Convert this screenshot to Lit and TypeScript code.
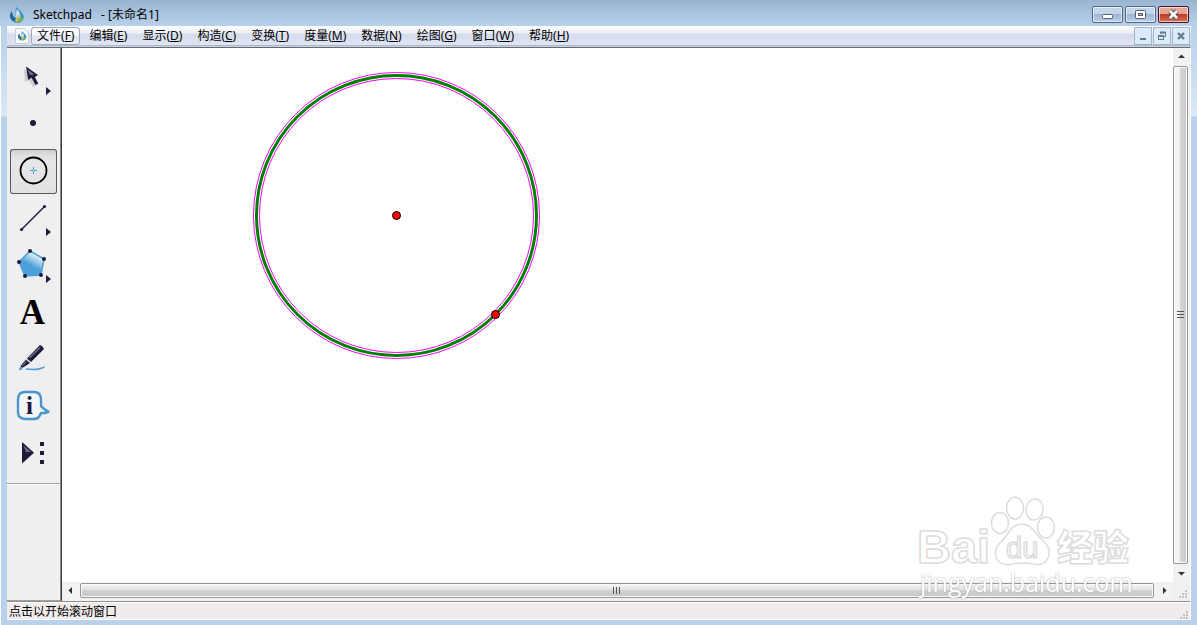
import { LitElement, html, svg, css } from "lit";
import { customElement, state } from "lit/decorators.js";

const flyout = svg`<path d="M36 32 L41 36 L36 40 Z" fill="#1f1a3a"/>`;

const tools = [
  {
    id: "select",
    label: "移动箭头工具",
    icon: svg`
      <path d="M14 14 L15 27 L19 25 L23 32 L26 31 L23 24 L26 22 Z" fill="#000" opacity=".15"/>
      <path d="M16 11.500 L18.3 25 L21.5 22.5 L25.5 30 L28.300 28.5 L24.8 22 L28 20 Z" fill="#1f1a3a"/>
      <path d="M17.5 14.5 L24.5 19.5 L20 20 Z" fill="#77758c"/>
      ${flyout}`,
  },
  { id: "point", label: "点工具", icon: svg`<circle cx="23" cy="21" r="3" fill="#1f1a3a"/>` },
  {
    id: "compass",
    label: "圆工具",
    icon: svg`
      <circle cx="23.5" cy="21.5" r="13" fill="none" stroke="#000" stroke-width="1.8"/>
      <path d="M20 21.5 H23 M24 21.5 H27 M23.5 18 V21 M23.5 22 V25" stroke="#3d9bd0"/>`,
  },
  {
    id: "segment",
    label: "线段工具",
    icon: svg`
      <path d="M11.5 33.5 L34.5 10.5" stroke="#1f1a3a" stroke-width="1.4"/>
      <circle cx="11.5" cy="33.5" r="1.6" fill="#1f1a3a"/>
      <circle cx="34.5" cy="10.5" r="1.6" fill="#1f1a3a"/>
      ${flyout}`,
  },
  {
    id: "polygon",
    label: "多边形工具",
    icon: svg`
      <defs><linearGradient id="poly" x1=".75" y1=".15" x2=".5" y2=".6">
        <stop offset="0" stop-color="#f2f9fd"/><stop offset="1" stop-color="#4ba0d8"/>
      </linearGradient></defs>
      <path d="M20 8 L34 16 L31 32 L15 33 L9 19 Z" fill="url(#poly)" stroke="#4ba0d8" stroke-width="1.5"/>
      ${[[20, 8], [34, 16], [31, 32], [15, 33], [9, 19]].map(
        ([x, y]) => svg`<circle cx=${x} cy=${y} r="2" fill="#1f1a3a"/>`
      )}
      ${flyout}`,
  },
  {
    id: "text",
    label: "文本工具",
    icon: svg`<text class="serif" x="22.5" y="34" font-size="35" text-anchor="middle">A</text>`,
  },
  {
    id: "marker",
    label: "标记工具",
    icon: svg`
      <path d="M30 8 Q33 9 34 12 L21 25 L17 21.5 Z" fill="#1f1a3a"/>
      <path d="M30 10.5 L19.5 21" stroke="#77758c" stroke-width="1.2"/>
      <path d="M16 22.5 L20 26 L13 30.5 L10.5 31 L11 28.5 Z" fill="#1f1a3a"/>
      <path d="M17 23.5 L12.5 29" stroke="#8a889a"/>
      <path d="M9 32.500 Q9 29.5 12 30 Q13.5 33.5 9 33 Z" fill="#4ba0d8"/>
      <path d="M16 32 Q28 33.500 34.5 30" fill="none" stroke="#4ba0d8" stroke-width="1.6"/>`,
  },
  {
    id: "info",
    label: "信息工具",
    icon: svg`
      <path d="M15 8 H24 Q31 8 31 16 V22 Q33 25 38.5 27.5 Q38 29 31 29 Q29 35 24 35 H16 Q8 35 8 28 V16 Q8 8 15 8 Z"
        fill="#f3f6f9" stroke="#4895cd" stroke-width="2.4" stroke-linejoin="round"/>
      <text class="serif info" x="19.5" y="30" font-size="25" text-anchor="middle">i</text>`,
  },
  {
    id: "custom",
    label: "自定义工具",
    icon: svg`
      <path d="M12 11 L24 21.8 L12 32.5 Z" fill="#1f1a3a"/>
      <path d="M13.5 14.5 L21 21 L16 21 Z" fill="#6f6d82"/>
      <path d="M30 11 h4 v4 h-4 Z M30 20 h4 v4 h-4 Z M30 29 h4 v4 h-4 Z" fill="#1f1a3a"/>`,
  },
];

const menus = [
  ["文件", "F"], ["编辑", "E"], ["显示", "D"], ["构造", "C"], ["变换", "T"],
  ["度量", "M"], ["数据", "N"], ["绘图", "G"], ["窗口", "W"], ["帮助", "H"],
];

const drop = svg`
  <path d="M7 0 Q15 6 15 11 Q13 16 8 16 Q2 15 1 10 Q1 6 3 5 Q4 9 7 11 Q6 5 7 0 Z" fill="#3b93c4"/>
  <path d="M8 2 Q12 6 11 11 Q10 13 8 13 Q6 8 8 2 Z" fill="#c4e6f5"/>
  <path d="M3 4 Q2 9 7 12 Q7 14 5 14 Q1 12 1 9 Q1 6 3 4 Z" fill="#27648f"/>
  <path d="M6 13 Q9 9 10 7 Q11 11 9 15 Q7 16 6 13 Z" fill="#d9b93a"/>
  <path d="M11 12 Q13 10 15 10 Q14 15 10 16 Z" fill="#6fbb5c"/>`;

const grip = svg`<path d="M7 1h2v2H7z M4 4h2v2H4z M7 4h2v2H7z M1 7h2v2H1z M4 7h2v2H4z M7 7h2v2H7z" fill="#c3c0bf"/>`;

@customElement("app-root")
export class AppRoot extends LitElement {
  @state() private tool = "compass";

  static styles = css`
    :host {
      display: flex;
      flex-direction: column;
      box-sizing: border-box;
      height: 100vh;
      padding: 0 6px 5px 7px;
      overflow: hidden;
      background:
        linear-gradient(#fff, #fff) left / 1px 100% no-repeat,
        linear-gradient(#99b4d1, #b9d1ea 26px, #c3d8ee 60px, #dce9f7 116px, #b9d1ea 117px);
      font: 12px/16px "Noto Sans", "Noto Sans CJK SC", sans-serif;
      color: #000;
    }
    * { box-sizing: border-box; }
    svg { display: block; flex: none; }
    button {
      display: flex;
      align-items: center;
      justify-content: center;
      margin: 0;
      padding: 0;
      border: 0;
      background: none;
      font: inherit;
      color: inherit;
    }
    .titlebar {
      flex: none;
      display: flex;
      align-items: center;
      height: 26px;
      margin: 0 -6px 0 -7px;
      padding: 3px 8px 0 9px;
      background: linear-gradient(#99b4d1, #b9d1ea);
    }
    .title { margin: 0 auto 0 8px; font: inherit; white-space: pre; }
    .caption { display: flex; gap: 2px; }
    .caption button {
      width: 31px;
      height: 17px;
      border: 1px solid #53687f;
      border-radius: 2px;
      box-shadow: inset 0 0 0 1px #ffffff99;
      background: linear-gradient(#c3d5e9 45%, #9db7d3 50%, #b9d0e9);
    }
    .caption .close {
      border-color: #4e1520;
      background: linear-gradient(#e5a597 45%, #bf3a24 50%, #d4735a);
    }
    .menubar {
      flex: none;
      display: flex;
      align-items: center;
      height: 20px;
      padding: 0 1px 0 8px;
      border-bottom: 1px solid #b2b6c4;
      background: linear-gradient(#fff, #eef0f7 35%, #d5dbec 45%, #e0e5f3);
    }
    .menus { display: flex; gap: 3px; margin: 0 auto 0 2px; }
    .menus button { height: 18px; padding: 0 6px; white-space: nowrap; }
    .menus .hot {
      padding: 0 5px;
      border: 1px solid #9fa6b7;
      border-radius: 3px;
      background: linear-gradient(#fafbfd 45%, #dfe3ef 50%, #e9edf6);
    }
    .mdi { display: flex; gap: 1px; }
    .mdi button {
      width: 18px;
      height: 18px;
      border: 1px solid #a3b5c8;
      background: #dcebf9;
    }
    .work {
      position: relative;
      flex: 1;
      display: flex;
      min-height: 0;
      border-top: 1px solid #696969;
      border-right: 1px solid #fff;
      margin-top: 1px;
      background: #f0f0f0;
    }
    .toolbox {
      flex: none;
      width: 55px;
      border-right: 2px ridge #8c8c8c;
      border-bottom: 1px solid #a0a0a0;
      background: #efefef;
    }
    .tools {
      display: flex;
      flex-direction: column;
      gap: 2px;
      padding: 7px 3px;
      border-bottom: 1px solid #a0a0a0;
      box-shadow: 0 1px #fff;
    }
    .tools button { width: 47px; height: 45px; border-radius: 3px; }
    .tools .active {
      background: linear-gradient(#c9c9c9, #dedede 6px, #e6e6e6 12px, #e2e2e2);
      box-shadow: inset 0 0 0 1px #5a5a5a;
    }
    .serif { font-family: "Liberation Serif", serif; font-weight: bold; }
    .info { fill: #1f1a3a; }
    .view {
      flex: 1;
      min-width: 0;
      display: grid;
      grid-template: minmax(0, 1fr) 19px / minmax(0, 1fr) 17px;
    }
    .canvas { width: 100%; height: 100%; background: #fff; }
    .bar { display: flex; background: #f2f2f2; }
    .bar button { flex: none; width: 17px; height: 17px; }
    .bar.v { flex-direction: column; }
    .thumb {
      flex: 1;
      display: flex;
      align-items: center;
      justify-content: center;
      border: 1px solid #979797;
      border-radius: 2px;
      box-shadow: inset 0 0 0 1px #fafafa;
    }
    .v .thumb { width: 15px; margin: 1px 0; background: linear-gradient(90deg, #f4f4f4 40%, #d6d6d9 50%, #c8c8cc); }
    .h .thumb { height: 15px; margin: 1px 2px 0 1px; background: linear-gradient(#f4f4f4, #e3e3e3 45%, #d1d1d3 50%, #c8c8cc); }
    .corner { display: flex; align-items: flex-end; justify-content: flex-end; padding: 3px; }
    .mark { position: absolute; right: 50px; bottom: 0; pointer-events: none; }
    .outline { fill: #fff; stroke: #dcdcdc; stroke-width: 1.5px; stroke-linejoin: round; }
    .bold { stroke: #dcdcdc; stroke-width: 4px; }
    .face { fill: #fff; stroke: #fff; stroke-width: 1.5px; }
    .latin { font: bold 47px "Liberation Sans", sans-serif; }
    .du { font: 29px "Liberation Sans", sans-serif; }
    .cjk { font: 900 36px "Noto Sans CJK SC", sans-serif; }
    .url { font: 25px "Open Sans", sans-serif; fill: #fff; filter: drop-shadow(0 0 1px #aaa); }
    .status {
      flex: none;
      display: flex;
      align-items: center;
      justify-content: space-between;
      height: 19px;
      padding: 2px 2px 0;
      border-top: 1px solid #8f8f8f;
      border-right: 1px solid #fff;
      border-bottom: 1px solid #fff;
      box-shadow: inset 0 1px #fff;
      background: #f0eceb;
    }
    .status svg { align-self: flex-end; }
  `;

  private arrow(label: string, d: string) {
    return html`<button aria-label=${label}>
      <svg width="9" height="9"><path d=${d} fill="#333"/></svg>
    </button>`;
  }

  render() {
    return html`
      <header class="titlebar">
        <svg width="16" height="16">${drop}</svg>
        <h1 class="title">Sketchpad   - [未命名1]</h1>
        <div class="caption">
          <button aria-label="最小化"><svg width="13" height="11"><rect x="1.5" y="5.5" width="10" height="4" rx="1" fill="#fff" stroke="#555e70"/></svg></button>
          <button aria-label="最大化"><svg width="13" height="11"><rect x="1.5" y="1.5" width="10" height="8" rx="1" fill="#fff" stroke="#555e70"/><rect x="4.5" y="4.5" width="4" height="2" fill="#a9c0da" stroke="#555e70"/></svg></button>
          <button class="close" aria-label="关闭"><svg width="13" height="11"><path d="M3 2 L10 9 M10 2 L3 9" stroke="#555060" stroke-width="4.6"/><path d="M3 2 L10 9 M10 2 L3 9" stroke="#fff" stroke-width="2.6"/></svg></button>
        </div>
      </header>

      <nav class="menubar">
        <svg width="14" height="16" viewBox="0 0 14 16">
          <path d="M.5 .5 H10 L13.5 4 V15.5 H.5 Z" fill="#f7f9fc" stroke="#c9ccd6"/>
          <g transform="translate(2.5 3) scale(.6)">${drop}</g>
        </svg>
        <div class="menus">
          ${menus.map(([name, key], i) => html`<button class=${i === 0 ? "hot" : ""}>${name}(<u>${key}</u>)</button>`)}
        </div>
        <div class="mdi">
          <button aria-label="最小化文档"><svg width="10" height="10"><path d="M2 8 H8" stroke="#667a8e" stroke-width="2"/></svg></button>
          <button aria-label="还原文档"><svg width="10" height="10"><path d="M3.5 3 V1.5 H8.5 V5.5 H7" fill="none" stroke="#667a8e"/><path d="M3 1.5 H9 M1 5 H7" stroke="#667a8e" stroke-width="2"/><rect x="1.5" y="4.5" width="5" height="4" fill="none" stroke="#667a8e"/></svg></button>
          <button aria-label="关闭文档"><svg width="10" height="10"><path d="M2 2 L8 8 M8 2 L2 8" stroke="#667a8e" stroke-width="2.4"/></svg></button>
        </div>
      </nav>

      <main class="work">
        <aside class="toolbox">
          <div class="tools">
            ${tools.map((t) => html`
              <button class=${t.id === this.tool ? "active" : ""} aria-label=${t.label}
                aria-pressed=${t.id === this.tool} @click=${() => (this.tool = t.id)}>
                <svg width="47" height="45">${t.icon}</svg>
              </button>`)}
          </div>
        </aside>
        <section class="view">
          <svg class="canvas" role="img" aria-label="画板">
            <circle cx="334.5" cy="167.5" r="143" fill="none" stroke="#f0f"/>
            <circle cx="334.5" cy="167.5" r="140" fill="none" stroke="#008000" stroke-width="3"/>
            <circle cx="334.5" cy="167.5" r="137" fill="none" stroke="#f0f"/>
            <circle cx="334.5" cy="167.5" r="4" fill="#f00" stroke="#000"/>
            <circle cx="433.5" cy="266.5" r="4" fill="#f00" stroke="#000"/>
          </svg>
          <div class="bar v">
            ${this.arrow("向上滚动", "M1 6 L4.5 2.5 L8 6 Z")}
            <div class="thumb"><svg width="7" height="8"><path d="M0 .5 H7 M0 3.5 H7 M0 6.5 H7" stroke="#555"/></svg></div>
            ${this.arrow("向下滚动", "M1 3 L4.5 6.5 L8 3 Z")}
          </div>
          <div class="bar h">
            ${this.arrow("向左滚动", "M6 1 L2.5 4.5 L6 8 Z")}
            <div class="thumb"><svg width="8" height="7"><path d="M.5 0 V7 M3.5 0 V7 M6.5 0 V7" stroke="#555"/></svg></div>
            ${this.arrow("向右滚动", "M3 1 L6.5 4.5 L3 8 Z")}
          </div>
          <div class="corner"><svg width="9" height="9">${grip}</svg></div>
        </section>
        <svg class="mark" width="228" height="113" role="img" aria-label="Baidu 经验">
          <text class="outline latin" x="5" y="75">Bai</text>
          <ellipse class="outline" cx="88" cy="35" rx="8.5" ry="10.5"/>
          <ellipse class="outline" cx="103" cy="20" rx="8.5" ry="11"/>
          <ellipse class="outline" cx="122.5" cy="21.5" rx="8.5" ry="10.5" transform="rotate(8 122.5 21.5)"/>
          <ellipse class="outline" cx="134" cy="39.5" rx="8.5" ry="10.5"/>
          <path class="outline" d="M110 36 C118 36 122 43 127 49 C133 55 138 58 137 66 C136 75 129 78 121 76 C113 74 108 75 101 76 C92 78 84 75 83.500 66 C83 57 90 54 94 48 C98 42 102 36 110 36 Z"/>
          <text class="outline du" x="94" y="70">du</text>
          <text class="outline cjk" x="145" y="73">经验</text>
          <text class="url" x="8" y="104">jingyan.baidu.com</text>
        </svg>
      </main>

      <footer class="status">
        <span>点击以开始滚动窗口</span>
        <svg width="9" height="9">${grip}</svg>
      </footer>
    `;
  }
}
